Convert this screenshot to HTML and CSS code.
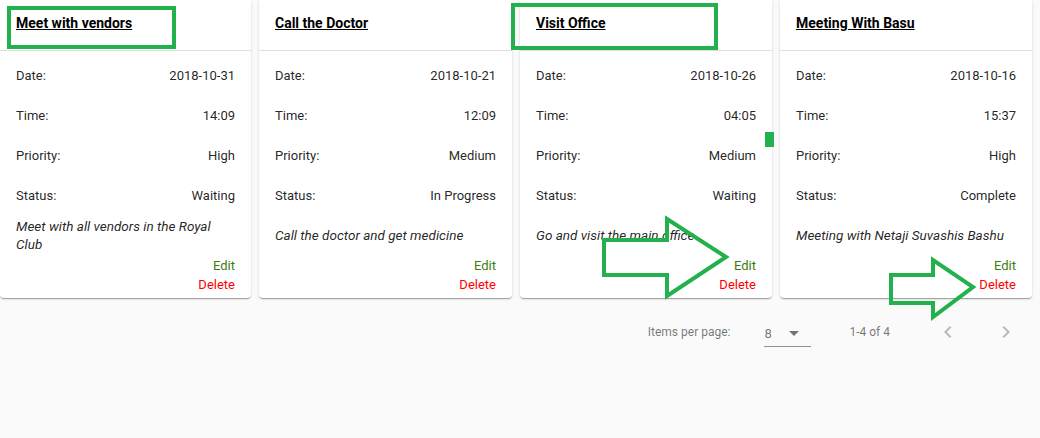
FILE: index.html
```html
<!DOCTYPE html>
<html>
<head>
<meta charset="utf-8">
<link rel="stylesheet" href="styles.css">
</head>
<body>
<div class="page">
  <div class="cards">
    <div class="card">
      <div class="card-header"><span class="title">Meet with vendors</span></div>
      <div class="card-body">
        <div class="row"><span>Date:</span><span>2018-10-31</span></div>
        <div class="row"><span>Time:</span><span>14:09</span></div>
        <div class="row"><span>Priority:</span><span>High</span></div>
        <div class="row"><span>Status:</span><span>Waiting</span></div>
        <div class="desc"><span>Meet with all vendors in the Royal Club</span></div>
        <div class="actions"><span class="edit">Edit</span><span class="delete">Delete</span></div>
      </div>
    </div>
    <div class="card">
      <div class="card-header"><span class="title">Call the Doctor</span></div>
      <div class="card-body">
        <div class="row"><span>Date:</span><span>2018-10-21</span></div>
        <div class="row"><span>Time:</span><span>12:09</span></div>
        <div class="row"><span>Priority:</span><span>Medium</span></div>
        <div class="row"><span>Status:</span><span>In Progress</span></div>
        <div class="desc"><span>Call the doctor and get medicine</span></div>
        <div class="actions"><span class="edit">Edit</span><span class="delete">Delete</span></div>
      </div>
    </div>
    <div class="card">
      <div class="card-header"><span class="title">Visit Office</span></div>
      <div class="card-body">
        <div class="row"><span>Date:</span><span>2018-10-26</span></div>
        <div class="row"><span>Time:</span><span>04:05</span></div>
        <div class="row"><span>Priority:</span><span>Medium</span></div>
        <div class="row"><span>Status:</span><span>Waiting</span></div>
        <div class="desc"><span>Go and visit the main office</span></div>
        <div class="actions"><span class="edit">Edit</span><span class="delete">Delete</span></div>
      </div>
    </div>
    <div class="card">
      <div class="card-header"><span class="title">Meeting With Basu</span></div>
      <div class="card-body">
        <div class="row"><span>Date:</span><span>2018-10-16</span></div>
        <div class="row"><span>Time:</span><span>15:37</span></div>
        <div class="row"><span>Priority:</span><span>High</span></div>
        <div class="row"><span>Status:</span><span>Complete</span></div>
        <div class="desc"><span>Meeting with Netaji Suvashis Bashu</span></div>
        <div class="actions"><span class="edit">Edit</span><span class="delete">Delete</span></div>
      </div>
    </div>
  </div>
  <div class="paginator">
    <span class="per-page">Items per page:</span>
    <div class="select">
      <span>8</span>
      <svg class="caret" width="10" height="5" viewBox="0 0 10 5"><path d="M0 0h10L5 5z" fill="rgba(0,0,0,0.54)"/></svg>
    </div>
    <span class="range">1-4 of 4</span>
    <div class="nav-btn">
      <svg width="24" height="24" viewBox="0 0 24 24"><path d="M15.41 7.41L14 6l-6 6 6 6 1.41-1.41L10.83 12z" fill="rgba(0,0,0,0.26)"/></svg>
    </div>
    <div class="nav-btn">
      <svg width="24" height="24" viewBox="0 0 24 24"><path d="M10 6L8.59 7.41 13.17 12l-4.58 4.59L10 18l6-6z" fill="rgba(0,0,0,0.26)"/></svg>
    </div>
  </div>
</div>
<svg class="annotations" width="1040" height="438" viewBox="0 0 1040 438">
  <g fill="none" stroke="#22b14c" stroke-width="4">
    <rect x="9" y="8" width="165" height="39"/>
    <rect x="513" y="5" width="203" height="43"/>
    <polygon points="604,240 667,240 667,219 726,257 667,296 667,275 604,275" stroke-linejoin="miter"/>
    <polygon points="891,275 933,275 933,260 973,287 933,317 933,303 891,303" stroke-linejoin="miter"/>
  </g>
  <rect x="765" y="132" width="9" height="15" fill="#22b14c"/>
</svg>
</body>
</html>
```

FILE: styles.css
```css
* { box-sizing: border-box; }
html, body {
  margin: 0;
  padding: 0;
  background: #fafafa;
  font-family: Roboto, "Liberation Sans", Arial, sans-serif;
  color: rgba(0, 0, 0, 0.87);
}
.page {
  width: 1040px;
  height: 438px;
  overflow: hidden;
}
.cards {
  display: grid;
  grid-template-columns: 251px 253px 252px 252px;
  gap: 8px;
}
.card {
  background: #fff;
  border-radius: 0 0 4px 4px;
  box-shadow: 0 2px 1px -1px rgba(0,0,0,.2), 0 1px 1px 0 rgba(0,0,0,.14), 0 1px 3px 0 rgba(0,0,0,.12);
  height: 298px;
}
.card-header {
  height: 51px;
  padding: 13px 16px 0;
  border-bottom: 1px solid #e0e0e0;
}
.title {
  font-size: 14px;
  line-height: 20px;
  font-weight: 700;
  color: #000;
  text-decoration: underline;
}
.card-body {
  padding: 5px 16px 0;
  font-size: 13px;
}
.row {
  height: 40px;
  display: flex;
  align-items: center;
  justify-content: space-between;
  line-height: 18px;
}
.desc {
  height: 37px;
  display: flex;
  align-items: center;
  font-style: italic;
  font-size: 13.5px;
  line-height: 18px;
  padding-top: 1px;
}
.actions {
  margin-top: 3px;
  display: flex;
  flex-direction: column;
  align-items: flex-end;
  line-height: 19px;
}
.edit { color: #3a7d0c; }
.delete { color: #ff0000; }
.paginator {
  margin-top: 6px;
  height: 56px;
  display: flex;
  align-items: center;
  justify-content: flex-end;
  padding-right: 14px;
  font-size: 12px;
  color: rgba(0, 0, 0, 0.54);
}
.per-page { margin-right: 34px; }
.select {
  width: 47px;
  height: 30px;
  display: flex;
  align-items: center;
  justify-content: space-between;
  padding: 3px 12px 0 0;
  border-bottom: 1px solid rgba(0, 0, 0, 0.42);
  font-size: 13px;
}
.caret { display: block; }
.range { margin-left: 38px; margin-right: 38px; }
.nav-btn {
  width: 40px;
  height: 40px;
  display: flex;
  align-items: center;
  justify-content: center;
}
.nav-btn + .nav-btn { margin-left: 18px; }
.annotations {
  position: absolute;
  left: 0;
  top: 0;
  pointer-events: none;
}
```
